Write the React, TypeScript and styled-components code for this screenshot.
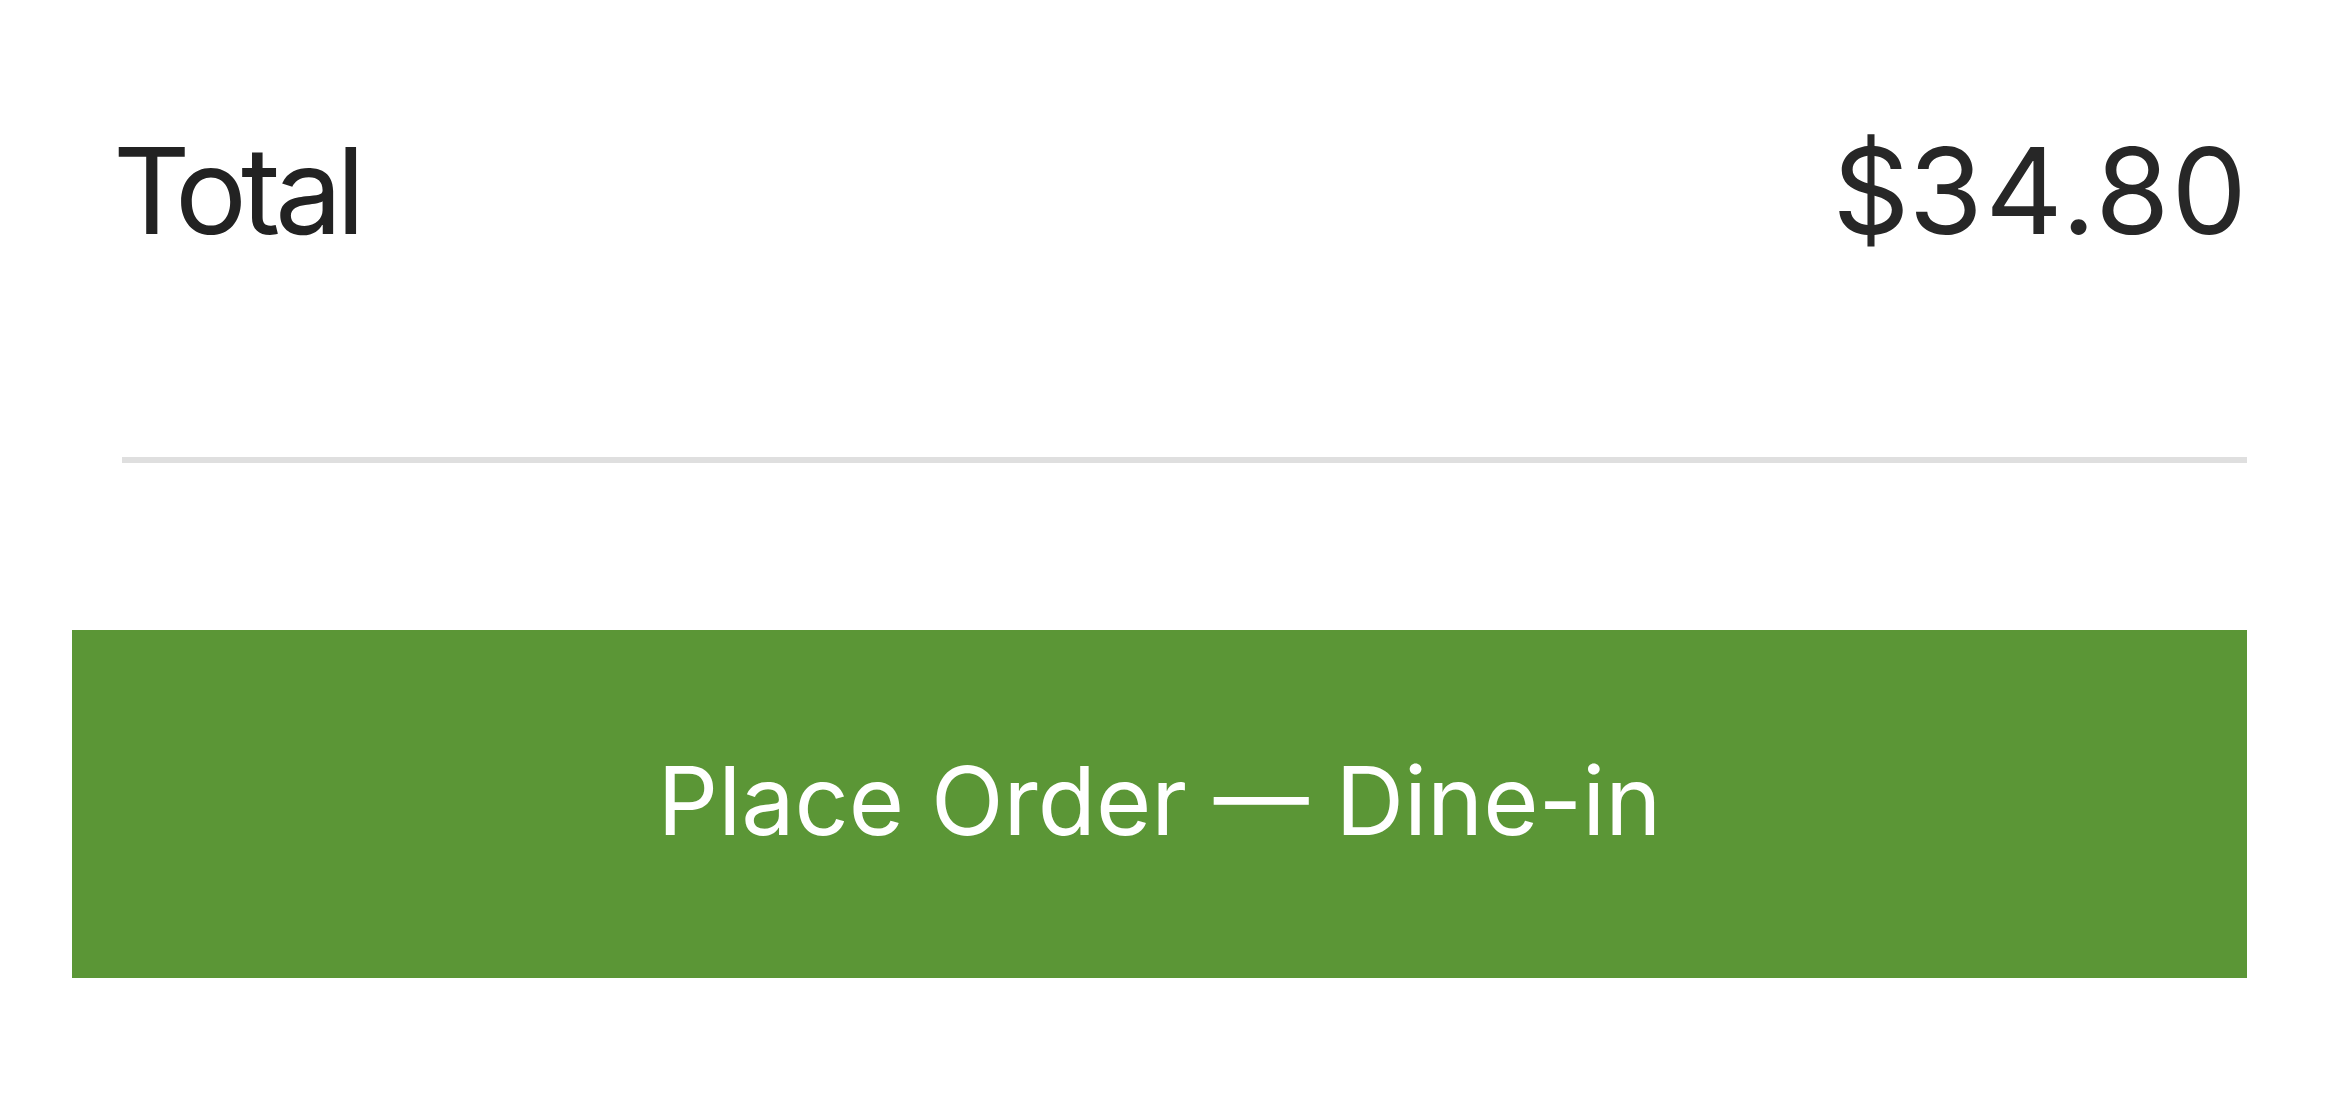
import React from "react";
import styled, { createGlobalStyle } from "styled-components";

const GlobalStyle = createGlobalStyle`
  html, body {
    margin: 0;
    padding: 0;
    background: #ffffff;
  }
  body {
    font-family: Inter, "Noto Sans", "Liberation Sans", sans-serif;
  }
`;

const Page = styled.div`
  display: flex;
  flex-direction: column;
  padding: 131px 79px 0 72px;
`;

const TotalRow = styled.div`
  display: flex;
  justify-content: space-between;
  align-items: baseline;
  padding: 0 0 0 41px;
  font-size: 120px;
  line-height: 1;
  font-weight: 400;
  color: #222222;
`;

const Label = styled.span`
  letter-spacing: -6px;
`;

const Amount = styled.span`
  color: #272727;
  font-variant-numeric: tabular-nums;
  letter-spacing: -1px;
`;

const Divider = styled.hr`
  border: 0;
  margin: 206px 0 0 50px;
  height: 6px;
  background: #dfdfdf;
`;

const PlaceButton = styled.button`
  margin-top: 167px;
  height: 348px;
  border: 0;
  border-radius: 0;
  background: #5b9636;
  color: #ffffff;
  font-family: Inter, "Noto Sans", "Liberation Sans", sans-serif;
  font-size: 95px;
  font-weight: 400;
  display: flex;
  align-items: center;
  justify-content: center;
  cursor: pointer;
  padding: 0 0 8px 0;
`;

export default function App() {
  return (
    <>
      <GlobalStyle />
      <Page>
        <TotalRow>
          <Label>Total</Label>
          <Amount>$34.80</Amount>
        </TotalRow>
        <Divider />
        <PlaceButton>Place Order — Dine-in</PlaceButton>
      </Page>
    </>
  );
}
